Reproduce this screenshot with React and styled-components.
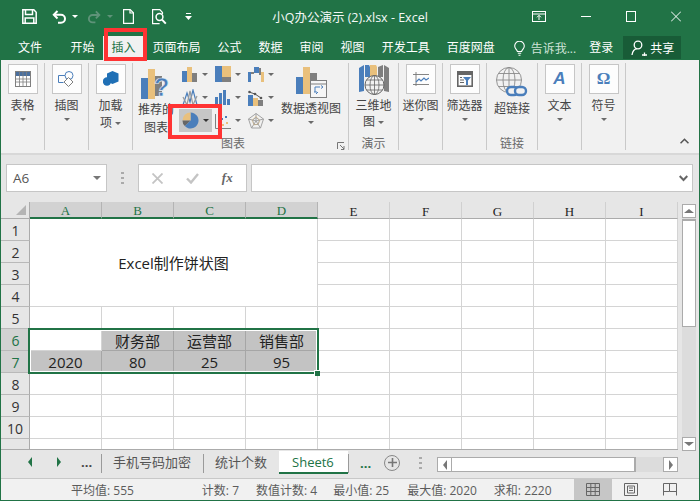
import React from 'react';
import styled, { createGlobalStyle } from 'styled-components';

const GREEN = '#217346';
const BLUE = '#4a7ebb';
const GOLD = '#e9c07c';
const GREY = '#7f7f7f';

const GlobalStyle = createGlobalStyle`
    * { box-sizing: border-box; }
    html, body { margin: 0; padding: 0; background: #fff; }
    body { font-family: "Open Sans", "Noto Sans CJK SC", sans-serif; }
`;

const Window = styled.div`
    position: relative;
    width: 700px;
    height: 501px;
    overflow: hidden;
    display: flex;
    flex-direction: column;
    background: #e6e6e6;
    border-left: 1px solid ${GREEN};
    border-right: 1px solid ${GREEN};
    border-bottom: 1px solid ${GREEN};
`;

/* title bar */
const TitleBar = styled.div`
    height: 33px;
    flex: none;
    display: grid;
    grid-template-columns: 1fr auto 1fr;
    align-items: center;
    background: ${GREEN};
    color: #fff;
    margin: 0 -1px;
`;
const Quick = styled.div`
    display: flex;
    align-items: center;
    padding-left: 22px;
`;
const QuickSlot = styled.span`
    display: flex;
    margin-left: ${p => p.$gap || 0}px;
`;
const DocTitle = styled.div`
    font-size: 12.5px;
    color: #f4f8f6;
    white-space: pre;
`;
const WinControls = styled.div`
    display: flex;
    align-items: center;
    justify-content: flex-end;
    padding-right: 19px;
    gap: 35px;
`;

/* ribbon tabs */
const TabRow = styled.div`
    height: 27px;
    flex: none;
    display: flex;
    align-items: flex-end;
    background: ${GREEN};
    margin: 0 -1px;
    padding-left: 1px;
`;
const FileTab = styled.div`
    height: 24px;
    line-height: 23px;
    font-size: 12px;
    color: #fff;
    padding: 0 20px 0 17px;
`;
const Tab = styled.div`
    height: 24px;
    line-height: 23px;
    font-size: 12px;
    padding: 0 8.5px;
    color: ${p => (p.$active ? GREEN : '#fff')};
    background: ${p => (p.$active ? '#f1f1f1' : 'transparent')};
`;
const TellMe = styled.div`
    height: 24px;
    display: flex;
    align-items: center;
    gap: 6px;
    margin-left: 10.5px;
    font-size: 12px;
    color: #cfe3d8;
`;
const Login = styled.div`
    height: 24px;
    line-height: 23px;
    margin-left: 13px;
    font-size: 12px;
    color: #fff;
`;
const Share = styled.div`
    width: 58px;
    height: 23px;
    margin: 0 0 1px 10px;
    display: flex;
    align-items: center;
    gap: 3px;
    padding-left: 8px;
    font-size: 12px;
    color: #fff;
    background: #185c37;
`;

/* ribbon */
const Ribbon = styled.div`
    height: 95px;
    flex: none;
    display: flex;
    padding-top: 3px;
    background: #f1f1f1;
    border-bottom: 2px solid #d8d8d8;
`;
const Group = styled.div`
    position: relative;
    flex: none;
    width: ${p => p.$w}px;
    height: 87px;
    display: flex;
    flex-direction: column;
    border-right: 1px solid #c9c9c9;
`;
const GroupBody = styled.div`
    flex: 1;
    display: flex;
    min-height: 0;
`;
const GroupLabel = styled.div`
    height: 12px;
    line-height: 12px;
    font-size: 12px;
    text-align: center;
    color: #6a6a6a;
    padding-right: ${p => p.$shift || 0}px;
`;
const BigButton = styled.div`
    flex: ${p => (p.$w ? 'none' : 1)};
    width: ${p => (p.$w ? `${p.$w}px` : 'auto')};
    display: flex;
    flex-direction: column;
    align-items: center;
    padding-top: 1px;
    font-size: 12px;
    color: #444;
`;
const IconBox = styled.div`
    width: 30px;
    height: 30px;
    display: flex;
    align-items: center;
    justify-content: center;
    background: #fdfdfd;
    border: 1px solid #c6c6c6;
`;
const PlainIcon = styled.div`
    height: ${p => p.$h || 30}px;
    margin-top: ${p => p.$top || 0}px;
    display: flex;
    justify-content: center;
`;
const BigLabel = styled.div`
    margin-top: ${p => p.$top ?? 3}px;
    line-height: ${p => p.$lh || 17}px;
    text-align: center;
    white-space: nowrap;
`;
const Caret = styled.span`
    display: inline-block;
    width: 0;
    height: 0;
    border-left: ${p => p.$size || 3}px solid transparent;
    border-right: ${p => p.$size || 3}px solid transparent;
    border-top: ${p => p.$size || 3}px solid ${p => p.$color || '#6a6a6a'};
    vertical-align: middle;
    margin-left: ${p => p.$gap || 0}px;
`;
const ButtonCaret = styled(Caret)`
    margin-top: ${p => p.$top ?? 4}px;
`;
const ChartGrid = styled.div`
    flex: none;
    width: 99px;
    display: grid;
    grid-template-columns: repeat(3, 33px);
    grid-auto-rows: 23px;
`;
const ChartButton = styled.div`
    display: flex;
    align-items: center;
    padding-left: 3px;
    gap: 4px;
    background: ${p => (p.$pressed ? '#c6c6c6' : 'transparent')};
`;
const Launcher = styled.span`
    position: absolute;
    right: 3px;
    bottom: 0;
    display: flex;
`;
const Collapse = styled.span`
    margin-left: auto;
    margin-right: 10px;
    align-self: flex-end;
    margin-bottom: 9px;
    display: flex;
`;

/* annotations */
const RedBox = styled.div`
    position: absolute;
    left: ${p => p.$x}px;
    top: ${p => p.$y}px;
    width: ${p => p.$w}px;
    height: ${p => p.$h}px;
    border: 4px solid #ff3333;
    pointer-events: none;
`;

/* formula bar */
const FormulaArea = styled.div`
    height: 47px;
    flex: none;
    display: flex;
    padding: 9px 6px 10px 5px;
`;
const FieldBox = styled.div`
    height: 28px;
    display: flex;
    align-items: center;
    background: #fff;
    border: 1px solid #c6c6c6;
`;
const NameBox = styled(FieldBox)`
    width: 101px;
    justify-content: space-between;
    padding: 0 5px 0 6px;
    font-size: 13.5px;
    color: #555;
`;
const Grip = styled.div`
    width: 31px;
    display: flex;
    align-items: center;
    justify-content: center;
`;
const FnBox = styled(FieldBox)`
    width: 109px;
    justify-content: space-around;
    padding: 0 2px;
    margin-right: 4px;
`;
const FxText = styled.span`
    font-family: "Liberation Serif", serif;
    font-style: italic;
    font-weight: bold;
    font-size: 13px;
    color: #666;
`;
const FormulaInput = styled(FieldBox)`
    flex: 1;
    justify-content: flex-end;
    padding-right: 4px;
`;

/* sheet */
const SheetArea = styled.div`
    height: 248px;
    flex: none;
    display: flex;
`;
const Sheet = styled.div`
    position: relative;
    flex: none;
    width: 677px;
    height: 248px;
    overflow: hidden;
    display: grid;
    grid-template-columns: 29px repeat(9, 72px);
    grid-template-rows: 17px repeat(10, 22px) 11px;
    background: #fff;
    border-bottom: 1px solid #ababab;
`;
const Corner = styled.div`
    display: flex;
    align-items: flex-end;
    justify-content: flex-end;
    padding: 0 3px 3px 0;
    background: #e6e6e6;
    border-right: 1px solid #ababab;
    border-bottom: 1px solid #ababab;
`;
const ColHead = styled.div`
    display: flex;
    justify-content: center;
    align-items: center;
    font-family: "Liberation Serif", serif;
    font-size: 13px;
    line-height: 13px;
    padding-top: 2px;
    color: ${p => (p.$on ? GREEN : '#222')};
    background: ${p => (p.$on ? '#d2d2d2' : '#e6e6e6')};
    border-right: 1px solid ${p => (p.$on ? '#b4b4b4' : '#d0d0d0')};
    border-bottom: ${p => (p.$on ? `2px solid ${GREEN}` : '1px solid #ababab')};
`;
const RowHead = styled.div`
    display: flex;
    justify-content: center;
    align-items: ${p => (p.$cut ? 'flex-start' : 'center')};
    padding-top: ${p => (p.$cut ? 6 : 3)}px;
    padding-left: ${p => (p.$wide ? 0 : 1)}px;
    font-size: 14px;
    line-height: 16px;
    color: ${p => (p.$on ? GREEN : '#333')};
    background: ${p => (p.$on ? '#d2d2d2' : '#e6e6e6')};
    border-right: 1px solid #ababab;
    border-bottom: 1px solid #b9b9b9;
`;
const Cell = styled.div`
    display: flex;
    align-items: center;
    justify-content: center;
    font-size: 15px;
    color: #222;
    padding-top: 1px;
    background: ${p => (p.$shade ? '#c3c3c3' : '#fff')};
    border-right: 1px solid ${p => (p.$shade ? '#a6a6a6' : '#d4d4d4')};
    border-bottom: 1px solid ${p => (p.$shade ? '#a6a6a6' : '#d4d4d4')};
`;
const Merged = styled(Cell)`
    grid-column: span 4;
    grid-row: span 4;
    padding-top: 0;
`;
const Selection = styled.div`
    position: absolute;
    left: 27px;
    top: 126px;
    width: 291px;
    height: 46px;
    border: 2px solid ${GREEN};
    box-shadow: inset 0 0 0 1px #fff;
`;
const FillHandle = styled.span`
    position: absolute;
    right: -3px;
    bottom: -4px;
    width: 6px;
    height: 6px;
    background: ${GREEN};
    border: 1px solid #fff;
    border-right: 0;
    border-bottom: 0;
`;

/* scroll bars */
const VScroll = styled.div`
    width: 14px;
    height: 247px;
    margin: 2px 0 0 4px;
    display: flex;
    flex-direction: column;
    background: #dcdcdc;
`;
const ScrollBtn = styled.div`
    flex: none;
    width: ${p => p.$w || 14}px;
    height: ${p => p.$h || 14}px;
    display: flex;
    align-items: center;
    justify-content: center;
    background: #fff;
    border: 1px solid #ababab;
`;
const VThumb = styled.div`
    height: 108px;
    margin-top: 1px;
    background: #fff;
    border: 1px solid #ababab;
    border-top-width: 2px;
`;
const Spacer = styled.div`
    flex: 1;
`;
const UpCaret = styled.span`
    width: 0;
    height: 0;
    border-left: 5px solid transparent;
    border-right: 5px solid transparent;
    border-bottom: 4px solid #777;
`;
const DownCaret = styled.span`
    width: 0;
    height: 0;
    border-left: 5px solid transparent;
    border-right: 5px solid transparent;
    border-top: 4px solid #777;
`;
const SideCaret = styled.span`
    width: 0;
    height: 0;
    border-top: 5px solid transparent;
    border-bottom: 5px solid transparent;
    ${p => (p.$left ? 'border-right' : 'border-left')}: 4px solid ${p => p.$color || '#777'};
`;

/* sheet tabs */
const SheetTabs = styled.div`
    height: 28px;
    flex: none;
    display: flex;
    align-items: flex-start;
`;
const SheetNav = styled.div`
    width: 100px;
    height: 23px;
    display: flex;
    align-items: center;
    padding-left: 27px;
    gap: 25px;
`;
const Dots = styled.span`
    font-size: 13px;
    font-weight: bold;
    line-height: 10px;
    letter-spacing: 0;
    color: ${p => p.$color || '#444'};
    margin-left: ${p => p.$gap || 0}px;
`;
const TabSep = styled.span`
    flex: none;
    width: 1px;
    height: 19px;
    margin-top: 4px;
    background: #9a9a9a;
`;
const SheetTab = styled.div`
    height: 23px;
    line-height: 22px;
    margin-top: 1px;
    padding: 0 ${p => (p.$active ? 13 : 12)}px 0 ${p => (p.$active ? 13 : 11)}px;
    font-size: 13px;
    color: ${p => (p.$active ? GREEN : '#555')};
    background: ${p => (p.$active ? '#fff' : 'transparent')};
    border-bottom: ${p => (p.$active ? `2px solid ${GREEN}` : '0')};
    width: ${p => (p.$active ? '69px' : 'auto')};
`;
const SheetActions = styled.div`
    width: 80px;
    flex: none;
    display: flex;
    align-items: center;
    height: 23px;
    margin-top: 1px;
`;
const AddSheet = styled.span`
    width: 16px;
    height: 16px;
    margin-left: 13px;
    display: flex;
    align-items: center;
    justify-content: center;
    border: 1.5px solid #888;
    border-radius: 50%;
`;
const ActionGrip = styled(Grip)`
    width: auto;
    margin-left: 19px;
`;
const HScroll = styled.div`
    width: 241px;
    height: 15px;
    margin: 7px 0 0 8px;
    display: flex;
    background: #dcdcdc;
`;
const HThumb = styled.div`
    width: 184px;
    background: #fff;
    border-top: 1px solid #ababab;
    border-bottom: 1px solid #ababab;
    border-right: 2px solid #ababab;
`;

/* status bar */
const StatusBar = styled.div`
    flex: 1;
    display: flex;
    align-items: center;
    padding: 0 10px 0 70px;
    background: #f1f1f1;
    border-top: 1px solid #c8c8c8;
    font-size: 12px;
    color: #5c5c5c;
`;
const StatusText = styled.span`
    margin-left: ${p => p.$gap ?? 16}px;
    white-space: nowrap;
`;
const ViewButtons = styled.div`
    margin-left: auto;
    height: 100%;
    display: flex;
`;
const ViewButton = styled.div`
    width: 38.5px;
    display: flex;
    align-items: center;
    justify-content: center;
    background: ${p => (p.$on ? '#c6c6c6' : 'transparent')};
`;

/* icons */
const SaveIcon = () => (
    <svg width="15" height="15" viewBox="0 0 15 15" fill="none" stroke="#fff" strokeWidth="1.5">
        <path d="M.8.8h11l2.4 2.4v11H.8z" />
        <path d="M3.5 1v4.5h7V1" />
        <path d="M3.2 14V9h8.6v5" />
    </svg>
);
const UndoIcon = ({ color = '#fff' }) => (
    <svg width="15" height="14" viewBox="0 0 15 14" fill="none" stroke={color} strokeWidth="2">
        <path d="M5.5 1 1.8 4.8l3.7 3.7" />
        <path d="M2 4.8h7a4 4 0 0 1 0 8H6" />
    </svg>
);
const RedoIcon = () => (
    <svg width="14" height="14" viewBox="0 0 15 14" fill="none" stroke="#5f9379" strokeWidth="2">
        <path d="M9.5 1l3.7 3.8-3.7 3.7" />
        <path d="M13 4.8H6a4 4 0 0 0 0 8h3" />
    </svg>
);
const NewIcon = () => (
    <svg width="11" height="15" viewBox="0 0 11 15" fill="none" stroke="#fff" strokeWidth="1.2">
        <path d="M.6.6h6.6l3.2 3.2v10.6H.6z" />
        <path d="M7 .8v3.2h3.2" />
    </svg>
);
const PreviewIcon = () => (
    <svg width="15" height="16" viewBox="0 0 15 16" fill="none" stroke="#fff" strokeWidth="1.2">
        <path d="M10.5 5V3.6L7.8.6H.6v14h7" />
        <circle cx="7.5" cy="8" r="3.4" strokeWidth="1.5" />
        <path d="m10 10.6 3.8 4" strokeWidth="2" />
    </svg>
);
const CustomizeIcon = () => (
    <svg width="7" height="7" viewBox="0 0 7 7" fill="#fff">
        <rect x="1" y="0" width="5" height="1" />
        <path d="M0 3h7L3.5 7z" />
    </svg>
);
const RibbonModeIcon = () => (
    <svg width="14" height="11" viewBox="0 0 14 11" fill="none" stroke="#fff">
        <rect x=".5" y=".5" width="13" height="10" />
        <path d="M.5 3h13M7 9V4.5M5 6.3 7 4.3l2 2" />
    </svg>
);
const MinIcon = () => (
    <svg width="10" height="11" viewBox="0 0 10 11" stroke="#fff"><path d="M0 5.5h10" /></svg>
);
const MaxIcon = () => (
    <svg width="10" height="11" viewBox="0 0 10 11" fill="none" stroke="#fff"><rect x=".5" y=".5" width="9" height="10" /></svg>
);
const CloseIcon = () => (
    <svg width="10" height="11" viewBox="0 0 10 11" fill="none" stroke="#fff"><path d="m0 .5 10 10M10 .5l-10 10" /></svg>
);
const BulbIcon = () => (
    <svg width="11" height="15" viewBox="0 0 11 15" fill="none" stroke="#fff" strokeWidth="1.1">
        <path d="M3.4 10.5C3 8.5.7 7.600.7 5a4.800 4.800 0 0 1 9.600 0c0 2.600-2.300 3.500-2.700 5.500z" />
        <path d="M3.800 12.300h3.400M4.500 14.300h2" />
    </svg>
);
const PersonIcon = () => (
    <svg width="16" height="16" viewBox="0 0 16 16" fill="none" stroke="#fff" strokeWidth="1.3">
        <circle cx="7" cy="5" r="3.800" />
        <path d="M1 15c.5-3.500 2.500-6 5-6.300M11 15h5M13.500 12.500v3.500" />
    </svg>
);
const TableIcon = () => (
    <svg width="16" height="16" viewBox="0 0 16 16" fill="none" stroke={GREY}>
        <rect x=".5" y=".5" width="15" height="15" />
        <rect x="1" y="1" width="14" height="4" fill="#4a6f9e" stroke="none" />
        <path d="M1 8h14M1 11h14M4.500 1v14M8 1v14M11.500 1v14" strokeWidth=".8" />
    </svg>
);
const IllustrationIcon = () => (
    <svg width="17" height="16" viewBox="0 0 17 16" fill="none" stroke={BLUE}>
        <path d="M7 4.500H.5v7h5" />
        <circle cx="11" cy="4.500" r="4" />
        <path d="m10.500 6.500 4.500 4.500-4.500 4.500L6 11z" fill="#fff" stroke={GREY} />
    </svg>
);
const AddinIcon = () => (
    <svg width="16" height="16" viewBox="0 0 16 16" fill="#1f6fb5">
        <path d="M9.500 0 15.500 2.500v8L9.500 13 4 10.500v-8z" />
        <circle cx="4" cy="10.500" r="4.200" />
    </svg>
);
const RecommendIcon = () => (
    <svg width="32" height="34" viewBox="0 0 32 34">
        <rect x="1" y="11" width="7" height="21" fill={BLUE} />
        <rect x="8" y="2" width="7" height="30" fill={GOLD} />
        <rect x="15" y="9" width="7" height="20" fill={GREY} />
        <text x="14" y="29" fontFamily="Liberation Sans, sans-serif" fontWeight="bold" fontSize="25" fill={BLUE} stroke="#f1f1f1" strokeWidth=".6">?</text>
    </svg>
);
const BarIcon = () => (
    <svg width="16" height="15" viewBox="0 0 16 15">
        <rect y="4" width="5" height="11" fill={BLUE} />
        <rect x="5" width="5" height="15" fill={GOLD} />
        <rect x="10" y="6" width="5" height="9" fill={GREY} />
    </svg>
);
const TreemapIcon = () => (
    <svg width="16" height="17" viewBox="0 0 16 17">
        <rect width="7" height="16" fill={BLUE} />
        <rect x="7" width="9" height="11" fill={GOLD} />
        <rect x="7" y="11" width="9" height="5" fill={GREY} />
    </svg>
);
const WaterfallIcon = () => (
    <svg width="16" height="15" viewBox="0 0 16 15">
        <rect y="5" width="3" height="10" fill={BLUE} />
        <rect x="3" y="5" width="3" height="2" fill={GREY} />
        <rect x="6" width="5" height="6" fill={BLUE} />
        <rect x="11" y="1" width="2" height="7" fill={GREY} />
        <rect x="13" y="5" width="3" height="10" fill={GOLD} />
    </svg>
);
const LineIcon = () => (
    <svg width="16" height="17" viewBox="0 0 16 17" fill="none" strokeWidth="1.2">
        <path d="M1 16 5 4l3 9 3-12 4 15" stroke={BLUE} />
        <path d="M1 8l4 8 3-14 3 14 4-9" stroke="#9a9a9a" />
    </svg>
);
const HistogramIcon = () => (
    <svg width="16" height="15" viewBox="0 0 16 15" fill={BLUE}>
        <rect y="7" width="3" height="8" />
        <rect x="4" y="3" width="3" height="12" />
        <rect x="8" width="3" height="15" />
        <rect x="12" y="9" width="3" height="6" />
    </svg>
);
const ComboIcon = () => (
    <svg width="16" height="16" viewBox="0 0 16 16">
        <rect y="5" width="5" height="11" fill={BLUE} />
        <rect x="5" y="8" width="5" height="8" fill={GOLD} />
        <rect x="10" y="10" width="5" height="6" fill={GREY} />
        <path d="M1 2l6 2 6 4" stroke="#555" fill="none" />
        <circle cx="1.500" cy="2" r="1.300" fill="#555" />
        <circle cx="7" cy="4" r="1.300" fill="#555" />
        <circle cx="13" cy="8" r="1.300" fill="#555" />
    </svg>
);
const PieIcon = () => (
    <svg width="17" height="17" viewBox="0 0 17 17">
        <path d="M8.500 8.500V.5a8 8 0 1 1-5.700 13.600z" fill={BLUE} />
        <path d="M8.500 8.500 .5 8.500A8 8 0 0 1 8.500.5z" fill={GOLD} />
        <path d="M8.500 8.500 2.800 14.100A8 8 0 0 1 .5 8.500z" fill="#666" />
    </svg>
);
const ScatterIcon = () => (
    <svg width="16" height="16" viewBox="0 0 16 16">
        <path d="M.5 1v14.500H16" stroke={GREY} fill="none" />
        <rect x="3" y="9" width="2" height="2" fill={BLUE} />
        <rect x="6" y="5" width="2" height="2" fill={BLUE} />
        <rect x="10" y="3" width="2" height="2" fill={BLUE} />
        <rect x="7" y="11" width="2" height="2" fill={GOLD} />
        <rect x="11" y="9" width="2" height="2" fill={GOLD} />
    </svg>
);
const RadarIcon = () => (
    <svg width="16" height="16" viewBox="0 0 16 16" fill="none" stroke="#9a9a9a" strokeWidth=".9">
        <path d="M8 .5 15.500 6l-3 9h-9L.5 6z" />
        <path d="M8 4.500 11.500 7l-1.400 4.500H5.900L4.500 7z" />
        <path d="M8 .5V8M15.500 6 8 8M12.500 15 8 8M3.500 15 8 8M.5 6 8 8" />
        <path d="M8 3l4 5-2 3-4 1-2-5z" stroke={GOLD} strokeOpacity=".45" />
    </svg>
);
const PivotIcon = () => (
    <svg width="31" height="31" viewBox="0 0 31 31">
        <rect x="0" y="10" width="7" height="17" fill={BLUE} />
        <rect x="7" y="0" width="7" height="27" fill={GOLD} />
        <rect x="14" y="6" width="7" height="21" fill={GREY} />
        <rect x="14.500" y="13.500" width="16" height="17" fill="#f6f6f6" stroke={GREY} />
        <path d="M15 17h15" stroke={GREY} />
        <path d="M19 25v-5h5M27 20l-2-1.500M27 20l-2 1.500M20 27l2-2M18 25h3" stroke={BLUE} fill="none" />
    </svg>
);
const MapIcon = () => (
    <svg width="30" height="31" viewBox="0 0 30 31">
        <path d="M0 3 5 0v26l-5 1z" fill={BLUE} />
        <path d="M6 0h4l1 2v10H6z" fill={BLUE} />
        <path d="M11 0h6l1 2v10h-7z" fill={GOLD} />
        <path d="M19 2 24 0v12h-5z" fill={GREY} />
        <path d="m25 0 5 3v24l-5-1z" fill={GREY} />
        <circle cx="15.500" cy="20" r="9.500" fill="#f1f1f1" stroke="#666" />
        <path d="M6 20h19M7.500 15h16M7.500 25h16M15.500 10.500v19" stroke="#666" strokeWidth=".8" />
        <ellipse cx="15.500" cy="20" rx="4.500" ry="9.500" fill="none" stroke="#666" strokeWidth=".8" />
    </svg>
);
const SparklineIcon = () => (
    <svg width="16" height="14" viewBox="0 0 16 14" fill="none">
        <path d="M3 0v14M0 2.500h16M0 12.500h16" stroke="#777" strokeWidth=".9" />
        <path d="M3 10l3-3 2 2 3-3 2 2 3-2" stroke={BLUE} strokeWidth="1.200" />
    </svg>
);
const SlicerIcon = () => (
    <svg width="16" height="16" viewBox="0 0 16 16">
        <rect x=".8" y=".8" width="14.400" height="14.400" fill="none" stroke="#666" strokeWidth="1.600" />
        <rect x="1" y="1" width="14" height="3" fill="#666" />
        <path d="M6 6h8l-3 3.500V14H9V9.500z" fill={BLUE} />
        <path d="M3 6.500h2M3 9h4M3 11.500h4" stroke="#666" />
    </svg>
);
const LinkIcon = () => (
    <svg width="32" height="31" viewBox="0 0 32 31">
        <g fill="none" stroke="#8a8a8a" strokeWidth=".9">
            <circle cx="13" cy="13" r="12.500" />
            <ellipse cx="13" cy="13" rx="6" ry="12.500" />
            <path d="M.5 13h25M2.500 6.500h21M2.500 19.500h21M13 .5v25" />
        </g>
        <g fill="#f1f1f1" stroke={BLUE} strokeWidth="2.400">
            <rect x="11" y="20" width="11" height="8" rx="4" />
            <rect x="19" y="20" width="11" height="8" rx="4" />
        </g>
    </svg>
);
const OmegaText = styled.span`
    font-family: "Liberation Serif", serif;
    font-size: 17px;
    font-weight: bold;
    color: ${BLUE};
`;
const AlphaText = styled.span`
    font-family: "Liberation Sans", sans-serif;
    font-size: 17px;
    font-weight: bold;
    font-style: italic;
    color: ${BLUE};
`;
const ChevronUp = () => (
    <svg width="9" height="6" viewBox="0 0 9 6" fill="none" stroke="#555" strokeWidth="1.600"><path d="m.5 5.300 4-4 4 4" /></svg>
);
const LauncherIcon = () => (
    <svg width="8" height="8" viewBox="0 0 8 8" fill="none" stroke="#777"><path d="M.5 7V.5H7M3 3l4 4M7 4v3.500H4" /></svg>
);
const CrossIcon = () => (
    <svg width="11" height="11" viewBox="0 0 11 11" stroke="#c4c4c4" strokeWidth="1.800"><path d="m.5.5 10 10M10.500.5l-10 10" /></svg>
);
const CheckIcon = () => (
    <svg width="13" height="11" viewBox="0 0 13 11" fill="none" stroke="#c4c4c4" strokeWidth="2.400"><path d="m1 5.500 4 4 7-8.500" /></svg>
);
const GripIcon = () => (
    <svg width="3" height="12" viewBox="0 0 3 12" fill="#aaa">
        <rect x="0" y="0" width="3" height="2" /><rect x="0" y="5" width="3" height="2" /><rect x="0" y="10" width="3" height="2" />
    </svg>
);
const FormulaChevron = () => (
    <svg width="9" height="7" viewBox="0 0 9 7" fill="none" stroke="#666" strokeWidth="2"><path d="m.7 1 3.800 4 3.800-4" /></svg>
);
const CornerIcon = () => (
    <svg width="10" height="10" viewBox="0 0 10 10" fill="#b4b4b4"><path d="M10 0v10H0z" /></svg>
);
const PlusIcon = () => (
    <svg width="9" height="9" viewBox="0 0 9 9" stroke="#777" strokeWidth="1.600"><path d="M0 4.500h9M4.500 0v9" /></svg>
);
const NormalViewIcon = () => (
    <svg width="14" height="13" viewBox="0 0 14 13" fill="none" stroke="#666"><path d="M.5.500h13v12H.5zM.5 4.500h13M.5 8.500h13M4.800.5v12M9.200.5v12" /></svg>
);
const PageViewIcon = () => (
    <svg width="14" height="13" viewBox="0 0 14 13" fill="none" stroke="#666"><path d="M.5.500h13v12H.5zM3.500 3h7v7h-7zM5 5h4M5 7.500h4" /></svg>
);
const BreakViewIcon = () => (
    <svg width="14" height="13" viewBox="0 0 14 13" fill="none" stroke="#666"><path d="M.5.500h13v12M.5.500v12M.5 8.500h6v-8M6.500 8.500h7" /></svg>
);

const columns = ['A', 'B', 'C', 'D', 'E', 'F', 'G', 'H', 'I'];
const tabs = ['开始', '插入', '页面布局', '公式', '数据', '审阅', '视图', '开发工具', '百度网盘'];
const tableData = {
    6: ['', '财务部', '运营部', '销售部'],
    7: ['2020', '80', '25', '95'],
};

function renderRow(row) {
    const cells = [];
    cells.push(
        <RowHead key={`h${row}`} $on={row === 6 || row === 7} $wide={row >= 10} $cut={row === 11}>{row === 11 ? '' : row}</RowHead>
    );
    columns.forEach((col, i) => {
        if (row <= 4 && i < 4) {
            if (row === 1 && i === 0) cells.push(<Merged key="title">Excel制作饼状图</Merged>);
            return;
        }
        const text = tableData[row] && i < 4 ? tableData[row][i] : '';
        const shade = (row === 6 && i > 0 && i < 4) || (row === 7 && i < 4);
        cells.push(<Cell key={`${col}${row}`} $shade={shade}>{text}</Cell>);
    });
    return cells;
}

function App() {
    return (
        <Window>
            <GlobalStyle />
            <TitleBar>
                <Quick>
                    <QuickSlot><SaveIcon /></QuickSlot>
                    <QuickSlot $gap={15}><UndoIcon /></QuickSlot>
                    <QuickSlot $gap={5}><Caret $color="#fff" /></QuickSlot>
                    <QuickSlot $gap={9}><RedoIcon /></QuickSlot>
                    <QuickSlot $gap={6}><Caret $color="#5f9379" /></QuickSlot>
                    <QuickSlot $gap={10}><NewIcon /></QuickSlot>
                    <QuickSlot $gap={18}><PreviewIcon /></QuickSlot>
                    <QuickSlot $gap={18}><CustomizeIcon /></QuickSlot>
                </Quick>
                <DocTitle>小Q办公演示 (2).xlsx - Excel</DocTitle>
                <WinControls>
                    <RibbonModeIcon />
                    <MinIcon />
                    <MaxIcon />
                    <CloseIcon />
                </WinControls>
            </TitleBar>

            <TabRow>
                <FileTab>文件</FileTab>
                {tabs.map(t => <Tab key={t} $active={t === '插入'}>{t}</Tab>)}
                <TellMe><BulbIcon />告诉我...</TellMe>
                <Login>登录</Login>
                <Share><PersonIcon />共享</Share>
            </TabRow>

            <Ribbon>
                <Group $w={44}>
                    <GroupBody>
                        <BigButton>
                            <IconBox><TableIcon /></IconBox>
                            <BigLabel>表格</BigLabel>
                            <ButtonCaret />
                        </BigButton>
                    </GroupBody>
                </Group>
                <Group $w={44}>
                    <GroupBody>
                        <BigButton>
                            <IconBox><IllustrationIcon /></IconBox>
                            <BigLabel>插图</BigLabel>
                            <ButtonCaret />
                        </BigButton>
                    </GroupBody>
                </Group>
                <Group $w={44}>
                    <GroupBody>
                        <BigButton>
                            <IconBox><AddinIcon /></IconBox>
                            <BigLabel>加载<br />项<Caret $gap={3} /></BigLabel>
                        </BigButton>
                    </GroupBody>
                </Group>
                <Group $w={216}>
                    <GroupBody>
                        <BigButton $w={46}>
                            <PlainIcon $top={3} $h={32}><RecommendIcon /></PlainIcon>
                            <BigLabel $top={2} $lh={18}>推荐的<br />图表</BigLabel>
                        </BigButton>
                        <ChartGrid>
                            <ChartButton><BarIcon /><Caret /></ChartButton>
                            <ChartButton><TreemapIcon /><Caret /></ChartButton>
                            <ChartButton><WaterfallIcon /><Caret /></ChartButton>
                            <ChartButton><LineIcon /><Caret /></ChartButton>
                            <ChartButton><HistogramIcon /><Caret /></ChartButton>
                            <ChartButton><ComboIcon /><Caret /></ChartButton>
                            <ChartButton $pressed><PieIcon /><Caret $color="#333" /></ChartButton>
                            <ChartButton><ScatterIcon /><Caret /></ChartButton>
                            <ChartButton><RadarIcon /><Caret /></ChartButton>
                        </ChartGrid>
                        <BigButton $w={66}>
                            <PlainIcon $top={3}><PivotIcon /></PlainIcon>
                            <BigLabel $top={3}>数据透视图</BigLabel>
                            <ButtonCaret />
                        </BigButton>
                    </GroupBody>
                    <GroupLabel $shift={15}>图表</GroupLabel>
                    <Launcher><LauncherIcon /></Launcher>
                </Group>
                <Group $w={50}>
                    <GroupBody>
                        <BigButton>
                            <PlainIcon $top={1} $h={31}><MapIcon /></PlainIcon>
                            <BigLabel $top={2} $lh={16}>三维地<br />图<Caret $gap={3} /></BigLabel>
                        </BigButton>
                    </GroupBody>
                    <GroupLabel>演示</GroupLabel>
                </Group>
                <Group $w={44}>
                    <GroupBody>
                        <BigButton>
                            <IconBox><SparklineIcon /></IconBox>
                            <BigLabel>迷你图</BigLabel>
                            <ButtonCaret />
                        </BigButton>
                    </GroupBody>
                </Group>
                <Group $w={44}>
                    <GroupBody>
                        <BigButton>
                            <IconBox><SlicerIcon /></IconBox>
                            <BigLabel>筛选器</BigLabel>
                            <ButtonCaret />
                        </BigButton>
                    </GroupBody>
                </Group>
                <Group $w={51}>
                    <GroupBody>
                        <BigButton>
                            <PlainIcon $top={3} $h={31}><LinkIcon /></PlainIcon>
                            <BigLabel $top={2}>超链接</BigLabel>
                        </BigButton>
                    </GroupBody>
                    <GroupLabel>链接</GroupLabel>
                </Group>
                <Group $w={44}>
                    <GroupBody>
                        <BigButton>
                            <IconBox><AlphaText>A</AlphaText></IconBox>
                            <BigLabel>文本</BigLabel>
                            <ButtonCaret />
                        </BigButton>
                    </GroupBody>
                </Group>
                <Group $w={44}>
                    <GroupBody>
                        <BigButton>
                            <IconBox><OmegaText>Ω</OmegaText></IconBox>
                            <BigLabel>符号</BigLabel>
                            <ButtonCaret />
                        </BigButton>
                    </GroupBody>
                </Group>
                <Collapse><ChevronUp /></Collapse>
            </Ribbon>

            <FormulaArea>
                <NameBox>A6<Caret $size={4} $color="#777" /></NameBox>
                <Grip><GripIcon /></Grip>
                <FnBox><CrossIcon /><CheckIcon /><FxText>fx</FxText></FnBox>
                <FormulaInput><FormulaChevron /></FormulaInput>
            </FormulaArea>

            <SheetArea>
                <Sheet>
                    <Corner><CornerIcon /></Corner>
                    {columns.map((c, i) => <ColHead key={c} $on={i < 4}>{c}</ColHead>)}
                    {Array.from({ length: 11 }, (_, i) => renderRow(i + 1))}
                    <Selection><FillHandle /></Selection>
                </Sheet>
                <VScroll>
                    <ScrollBtn><UpCaret /></ScrollBtn>
                    <VThumb />
                    <Spacer />
                    <ScrollBtn><DownCaret /></ScrollBtn>
                </VScroll>
            </SheetArea>

            <SheetTabs>
                <SheetNav>
                    <SideCaret $left $color={GREEN} />
                    <SideCaret $color={GREEN} />
                    <Dots $gap={-5}>...</Dots>
                </SheetNav>
                <TabSep />
                <SheetTab>手机号码加密</SheetTab>
                <TabSep />
                <SheetTab>统计个数</SheetTab>
                <SheetTab $active>Sheet6</SheetTab>
                <TabSep />
                <SheetActions>
                    <Dots $color={GREEN} $gap={11}>...</Dots>
                    <AddSheet><PlusIcon /></AddSheet>
                    <ActionGrip><GripIcon /></ActionGrip>
                </SheetActions>
                <HScroll>
                    <ScrollBtn $w={15} $h={15}><SideCaret $left /></ScrollBtn>
                    <HThumb />
                    <Spacer />
                    <ScrollBtn $w={15} $h={15}><SideCaret /></ScrollBtn>
                </HScroll>
            </SheetTabs>

            <StatusBar>
                <StatusText $gap={0}>平均值: 555</StatusText>
                <StatusText $gap={68}>计数: 7</StatusText>
                <StatusText $gap={17}>数值计数: 4</StatusText>
                <StatusText $gap={16}>最小值: 25</StatusText>
                <StatusText $gap={18}>最大值: 2020</StatusText>
                <StatusText $gap={17}>求和: 2220</StatusText>
                <ViewButtons>
                    <ViewButton $on><NormalViewIcon /></ViewButton>
                    <ViewButton><PageViewIcon /></ViewButton>
                    <ViewButton><BreakViewIcon /></ViewButton>
                </ViewButtons>
            </StatusBar>

            <RedBox $x={103} $y={28} $w={43} $h={33} />
            <RedBox $x={167} $y={104} $w={54} $h={35} />
        </Window>
    );
}

export default App;
